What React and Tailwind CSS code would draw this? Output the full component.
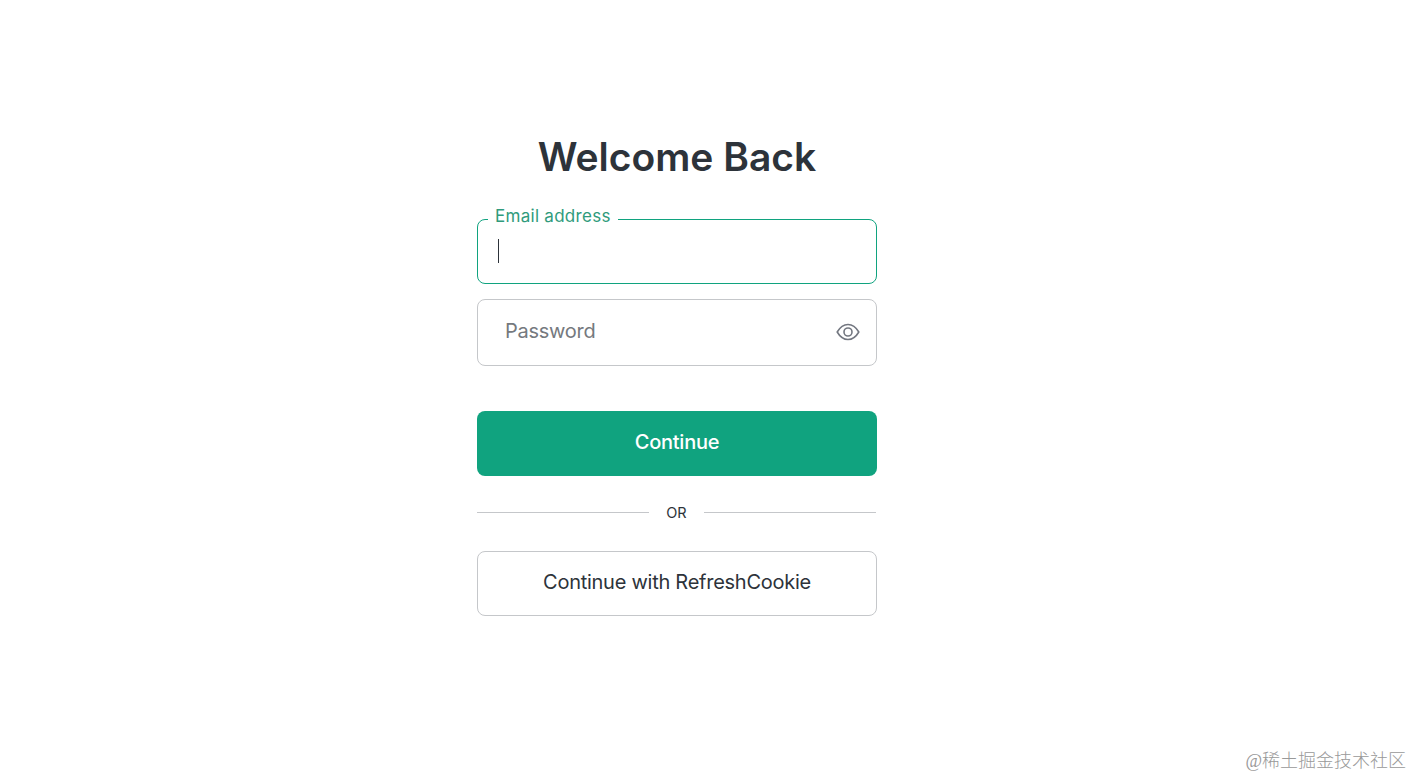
import { useState } from 'react';

function EyeIcon() {
  return (
    <svg width="24" height="18" viewBox="0 0 24 18" fill="none" stroke="#737780" strokeWidth="1.6">
      <path d="M1.2 9C4 4.2 7.6 1.5 12 1.5S20 4.2 22.8 9C20 13.8 16.4 16.5 12 16.5S4 13.8 1.2 9Z" strokeLinejoin="round" />
      <circle cx="12" cy="9" r="4" />
    </svg>
  );
}

export default function App() {
  const [showPassword, setShowPassword] = useState(false);

  return (
    <div className="relative h-[777px] w-[1412px] overflow-hidden bg-white font-['Inter',sans-serif] text-[#2d333a]">
      <main className="flex w-[1354px] flex-col items-center pt-[132px]">
        <h1 className="h-[87px] text-[39px] leading-[50px] font-semibold whitespace-nowrap">
          Welcome Back
        </h1>

        <form className="w-[400px]" onSubmit={(e) => e.preventDefault()}>
          {/* Email, focused */}
          <div className="relative h-[65px] rounded-lg border border-[#10a37f]">
            <label className="absolute -top-[14px] left-[10px] bg-white pr-[7px] pl-[7px] text-[17px] leading-[21px] tracking-[0.28px] whitespace-nowrap text-[#2f9b7c]">
              Email address
            </label>
            <div className="mt-[19px] ml-[20px] h-6 w-px bg-[#2d333a]" />
          </div>

          {/* Password */}
          <div className="mt-[15px] flex h-[67px] items-center justify-between rounded-lg border border-[#c5c7ca] pr-[16px] pb-[2px] pl-[27px]">
            <span className="pb-px text-[20px] leading-6 tracking-[-0.25px] text-[#75797e]">Password</span>
            <button type="button" aria-label="Show password" onClick={() => setShowPassword(!showPassword)}>
              <EyeIcon />
            </button>
          </div>

          <button
            type="submit"
            className="mt-[45px] flex h-[65px] w-full items-center justify-center rounded-lg bg-[#10a37f] pb-1 text-[20px] font-medium tracking-[-0.25px] text-white"
          >
            Continue
          </button>

          <div className="mt-[25px] flex h-[23px] items-center">
            <div className="h-px w-[172px] bg-[#c5c7ca]" />
            <span className="flex-1 text-center text-[14.5px] leading-[23px]">OR</span>
            <div className="mr-px h-px w-[172px] bg-[#c5c7ca]" />
          </div>

          <button
            type="button"
            className="mt-[27px] flex h-[65px] w-full items-center justify-center rounded-lg border border-[#c5c7ca] pb-1 text-[20px] tracking-[-0.26px]"
          >
            Continue with RefreshCookie
          </button>
        </form>
      </main>

      <div className="absolute right-[6px] bottom-[4px] font-['Liberation_Serif','Noto_Sans_CJK_SC',serif] text-[18px] leading-6 font-light whitespace-nowrap text-[#999]">
        @稀土掘金技术社区
      </div>
    </div>
  );
}
